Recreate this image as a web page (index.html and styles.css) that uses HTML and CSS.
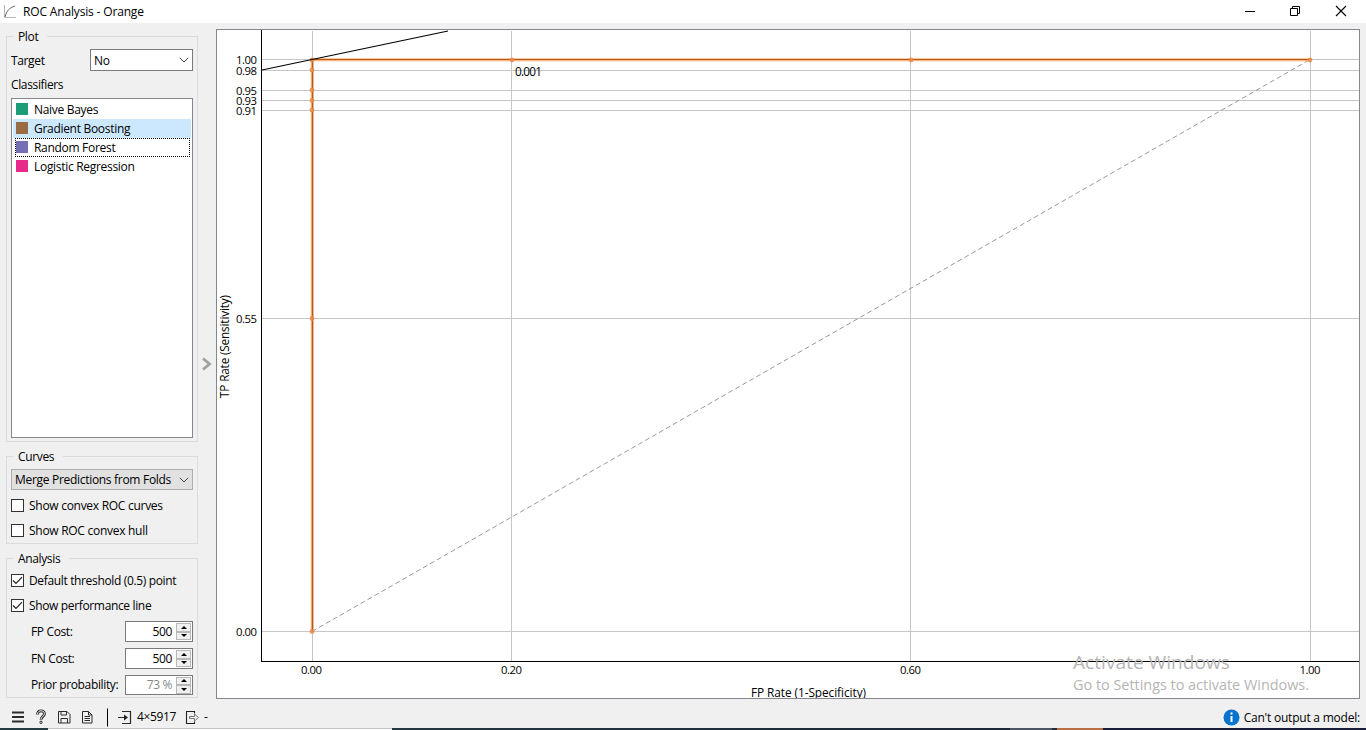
FILE: index.html
```
<!DOCTYPE html>
<html lang="en">
<head>
<meta charset="utf-8">
<title>ROC Analysis - Orange</title>
<link rel="stylesheet" href="styles.css">
</head>
<body>
<div class="window">
  <header class="titlebar">
    <svg class="app-icon" width="14" height="14" viewBox="0 0 14 14" fill="none"><path d="M.5 0v12.500H12" stroke="#b5b5b5"/><path d="M1 12C2.500 6 5 3 11 1" stroke="#666"/></svg>
    <h1 class="title">ROC Analysis - Orange</h1>
    <svg class="win-buttons" width="116" height="22" viewBox="0 0 116 22" fill="none" stroke="#000"><path d="M5 10.500h10"/><path d="M50.500 7.500h7v7h-7zM52.500 7.500v-2h7v7h-2"/><path d="M96 5l10 10M106 5l-10 10" stroke-width="1.100"/></svg>
  </header>

  <main class="content">
    <aside class="sidebar">
      <fieldset class="group group-plot">
        <legend>Plot</legend>
        <div class="row target-row">
          <label>Target</label>
          <div class="combo combo-white"><span>No</span><svg width="10" height="6" viewBox="0 0 10 6" fill="none" stroke="#444"><path d="M.8.8 5 5 9.200.8"/></svg></div>
        </div>
        <div class="caption">Classifiers</div>
        <ul class="list">
          <li><i class="swatch green"></i>Naive Bayes</li>
          <li class="selected"><i class="swatch brown"></i>Gradient Boosting</li>
          <li class="focused"><i class="swatch purple"></i>Random Forest</li>
          <li><i class="swatch pink"></i>Logistic Regression</li>
        </ul>
      </fieldset>

      <fieldset class="group group-curves">
        <legend>Curves</legend>
        <div class="combo combo-grey"><span>Merge Predictions from Folds</span><svg width="10" height="6" viewBox="0 0 10 6" fill="none" stroke="#444"><path d="M.8.8 5 5 9.200.8"/></svg></div>
        <label class="check"><i class="box"></i>Show convex ROC curves</label>
        <label class="check"><i class="box"></i>Show ROC convex hull</label>
      </fieldset>

      <fieldset class="group group-analysis">
        <legend>Analysis</legend>
        <label class="check"><i class="box"><svg width="11" height="11" viewBox="0 0 11 11" fill="none" stroke="#222" stroke-width="1.200"><path d="M1 5.500 4 8.500 10 2.200"/></svg></i>Default threshold (0.5) point</label>
        <label class="check"><i class="box"><svg width="11" height="11" viewBox="0 0 11 11" fill="none" stroke="#222" stroke-width="1.200"><path d="M1 5.500 4 8.500 10 2.200"/></svg></i>Show performance line</label>
        <div class="spin-row"><label>FP Cost:</label><div class="spin"><span>500</span><span class="arrows"><i class="up"></i><i class="down"></i></span></div></div>
        <div class="spin-row"><label>FN Cost:</label><div class="spin"><span>500</span><span class="arrows"><i class="up"></i><i class="down"></i></span></div></div>
        <div class="spin-row last"><label>Prior probability:</label><div class="spin disabled"><span>73 %</span><span class="arrows"><i class="up"></i><i class="down"></i></span></div></div>
      </fieldset>
    </aside>

    <div class="splitter"><svg width="10" height="14" viewBox="0 0 10 14" fill="none" stroke="#a0a0a0" stroke-width="2.800"><path d="M1 1.500 7.500 7 1 12.500"/></svg></div>

    <section class="plot">
      <svg class="chart" width="1142" height="668" viewBox="217 30 1142 668">
        <g class="grid">
          <path d="M262 59.500H1359M262 70.500H1359M262 90.500H1359M262 100.500H1359M262 110.500H1359M262 318.500H1359M262 631.500H1359"/>
          <path d="M312.500 31V661M511.500 31V661M910.500 31V661M1310.500 31V661"/>
        </g>
        <path class="diagonal" d="M312 631.500 1310 59.500"/>
        <path class="curve-glow" d="M312.300 631.500V59.700H1310"/>
        <path class="curve" d="M312.500 631.500V59.500H1310"/>
        <g class="points">
          <circle cx="312" cy="631.500" r="2.400"/><circle cx="312" cy="318.500" r="2.400"/><circle cx="312" cy="110" r="2.400"/><circle cx="312" cy="100.500" r="2.400"/><circle cx="312" cy="90" r="2.400"/><circle cx="312" cy="70" r="2.400"/><circle cx="312" cy="60" r="2.400"/><circle cx="512" cy="60" r="2.400"/><circle cx="911" cy="60" r="2.400"/><circle cx="1310" cy="60" r="2.400"/>
        </g>
        <path class="performance" d="M262 70 312 59.500 448 31"/>
        <path class="axis" d="M261.500 30V661.500H1359" shape-rendering="crispEdges"/>
        <g class="ticks">
          <text x="236" y="64" textLength="21">1.00</text><text x="236" y="75" textLength="21">0.98</text><text x="236" y="95" textLength="21">0.95</text><text x="236" y="105" textLength="21">0.93</text><text x="236" y="115" textLength="21">0.91</text><text x="236" y="323" textLength="21">0.55</text><text x="236" y="636" textLength="21">0.00</text>
          <text x="301" y="674" textLength="21">0.00</text><text x="501" y="674" textLength="21">0.20</text><text x="900" y="674" textLength="21">0.60</text><text x="1299.500" y="674" textLength="21">1.00</text>
        </g>
        <text class="note" x="515" y="76" textLength="27">0.001</text>
        <text class="label" x="751" y="697" textLength="115">FP Rate (1-Specificity)</text>
        <text class="label" transform="translate(229 398) rotate(-90)" textLength="103">TP Rate (Sensitivity)</text>
        <text class="watermark big" x="1073" y="668.500" textLength="157" lengthAdjust="spacingAndGlyphs">Activate Windows</text>
        <text class="watermark small" x="1073" y="690" textLength="236" lengthAdjust="spacingAndGlyphs">Go to Settings to activate Windows.</text>
      </svg>
    </section>
  </main>

  <footer class="statusbar">
    <svg class="tools" width="135" height="20" viewBox="0 0 135 20" fill="none" stroke="#2c2c2c">
      <path d="M12 5.500h12M12 10h12M12 14.500h12" stroke-width="1.900"/>
      <path d="M37.500 7.500c0-5 7-4.500 7-.8 0 2.800-3.500 2.500-3.500 6" stroke-width="2.800"/><path d="M37.500 7.200c0-4.700 7-4.200 7-.5 0 2.800-3.500 2.500-3.500 5.700" stroke="#f0f0f0" stroke-width="1"/><circle cx="41" cy="15.300" r="1.200"/>
      <path d="M58.500 4.500h8.500l3 3v8.500h-11.500zM61 4.500v3.500h5.500v-3.500M61 16v-4.500h6.500v4.500"/>
      <path d="M82.500 4.500h6l3.500 3.500v8h-9.500zM88.500 4.500v3.500h3.500M84.500 9.500h5.500M84.500 11.500h5.500M84.500 13.500h5.500"/>
      <path d="M107.500 1.500v18" stroke="#000"/>
      <path d="M122 4.500h8.500v12h-8.500M118 10.500h7" stroke-width="1.200"/><path d="M124 7.500 128 10.500 124 13.500z" fill="#222" stroke="none"/>
    </svg>
    <span class="size">4×5917</span>
    <svg class="out" width="16" height="20" viewBox="0 0 16 20" fill="none"><path d="M9.500 6.500v-2h-8v12h8v-2" stroke="#222" stroke-width="1.100"/><path d="M4.500 9.500h5v-2.500l4 3.500-4 3.500v-2.500h-5z" stroke="#777"/></svg>
    <span class="dash">-</span>
    <span class="message"><svg width="17" height="17" viewBox="0 0 17 17"><circle cx="8.500" cy="8.500" r="8" fill="#0873cc"/><path d="M8.500 7v6M8.500 3.500v2" stroke="#fff" stroke-width="2"/></svg><span class="msg">Can't output a model:</span></span>
  </footer>
  <div class="edge"><i class="e1"></i><i class="e2"></i><i class="e3"></i><i class="e4"></i><i class="e5"></i><i class="e6"></i></div>
</div>
</body>
</html>
```

FILE: styles.css
```
* { box-sizing: border-box; }
body { margin: 0; background: #f0f0f0; color: #000; font: 12px/16px "Open Sans", "Noto Sans", sans-serif; letter-spacing: -0.36px; }
svg { display: block; flex: none; }
i { font-style: normal; }
.window { width: 1366px; height: 730px; display: flex; flex-direction: column; overflow: hidden; }

.titlebar { height: 23px; flex: none; display: flex; align-items: center; background: #fff; padding: 0 10px 0 4px; }
.title { margin: 0 auto 0 5px; font-size: 12px; font-weight: 400; letter-spacing: -0.16px; padding-top: 1px; }

.content { height: 676px; flex: none; display: flex; }
.sidebar { width: 198px; padding: 5px 0 0 6px; display: flex; flex-direction: column; gap: 6px; }
.group { margin: 0; min-width: 0; border: 1px solid #dcdcdc; padding: 0 4px; width: 192px; }
.group legend { margin-left: 2px; padding: 1px 9px 0 5px; height: 16px; line-height: 15px; }
.group-plot { height: 414px; }
.group-curves { height: 96px; }
.group-analysis { height: 148px; }
.target-row { display: flex; justify-content: space-between; align-items: center; padding-top: 5px; }
.target-row label { padding-top: 1px; }
.combo { display: flex; align-items: center; justify-content: space-between; padding: 0 3px; height: 22px; }
.combo-white { width: 103px; background: #fff; border: 1px solid #7a7a7a; }
.combo-white span { padding-top: 1px; }
.combo-grey { margin-top: 5px; height: 21px; background: #e1e1e1; border: 1px solid #adadad; white-space: nowrap; letter-spacing: -0.3px; }
.caption { margin-top: 6px; }
.list { list-style: none; margin: 5px 0 0; padding: 1px; height: 340px; background: #fff; border: 1px solid #828790; }
.list li { height: 19px; display: flex; align-items: center; gap: 6px; padding: 1px 0 0 3px; letter-spacing: -0.3px; }
.list .selected { background: #cce8ff; }
.list .focused { border: 1px dotted #000; margin: 0 1px 0 2px; padding: 0; }
.swatch { width: 12px; height: 12px; margin-top: -2px; }
.green { background: #1b9e77; }
.brown { background: #996b45; }
.purple { background: #7570b3; }
.pink { background: #e7298a; }

.check { display: flex; align-items: center; gap: 5px; height: 25px; letter-spacing: -0.28px; white-space: nowrap; }
.group-analysis .check { letter-spacing: -0.35px; }
.group-curves .combo + .check { margin-top: 3px; }
.group-analysis legend + .check { margin-top: 2px; }
.box { width: 13px; height: 13px; background: #fff; border: 1px solid #333; }
.spin-row { display: flex; align-items: center; justify-content: space-between; height: 21px; margin: 3px 0 6px; padding-left: 20px; }
.spin-row + .spin-row { margin-top: 0; }
.spin-row.last { height: 20px; white-space: nowrap; }
.spin { width: 68px; height: 100%; display: flex; align-items: center; justify-content: flex-end; gap: 4px; padding: 0 1px; background: #fff; border: 1px solid #7a7a7a; }
.disabled > span:first-child { color: #888; }
.arrows { width: 15px; height: 17px; display: flex; flex-direction: column; }
.arrows i { flex: 1; border: 1px solid #b8b8b8; background: #f0f0f0; display: flex; align-items: center; justify-content: center; }
.arrows i::after { content: ""; border: 3px solid transparent; }
.arrows .up::after { border-top: 0; border-bottom-color: #000; }
.arrows .down::after { border-bottom: 0; border-top-color: #000; }

.splitter { width: 18px; padding: 334px 0 0 4px; }
.plot { width: 1144px; height: 670px; margin-top: 6px; background: #fff; border: 1px solid #828790; }
.chart path { fill: none; }
.chart text { letter-spacing: 0; }
.grid { stroke: #c6c6c6; }
.diagonal { stroke: #999; stroke-dasharray: 5 3; }
.curve-glow { stroke: #f8b57c; stroke-width: 3; }
.curve { stroke: #b5591c; stroke-width: 1.2; }
.points { fill: #e98945; fill-opacity: .85; }
.performance { stroke: #000; stroke-width: 1.1; }
.axis { stroke: #000; stroke-width: 1; }
.ticks { font-size: 11.3px; }
.note, .label { font-size: 11.8px; }
.watermark { fill: #b5b5b5; }
.big { font-size: 18.5px; }
.small { font-size: 14px; }

.statusbar { height: 29px; flex: none; display: flex; align-items: center; padding: 7px 6px 0 0; }
.size { margin-left: 2px; width: 48px; white-space: nowrap; }
.dash { margin-left: 3px; }
.message { margin-left: auto; display: flex; align-items: center; gap: 4px; letter-spacing: -0.22px; }
.msg { padding-top: 1px; }

.edge { height: 2px; flex: none; display: flex; background: #1a1d3a; }
.e1 { width: 48px; background: #243b42; }
.e2 { width: 344px; background: #c4c4c4; border-bottom: 1px solid #fff; }
.e3 { width: 618px; background: linear-gradient(90deg, #243841, #1c2737); }
.e4 { width: 42px; background: #4b5564; }
.e5 { width: 5px; background: #252b3d; }
.e6 { width: 46px; background: #b96f43; }
```
